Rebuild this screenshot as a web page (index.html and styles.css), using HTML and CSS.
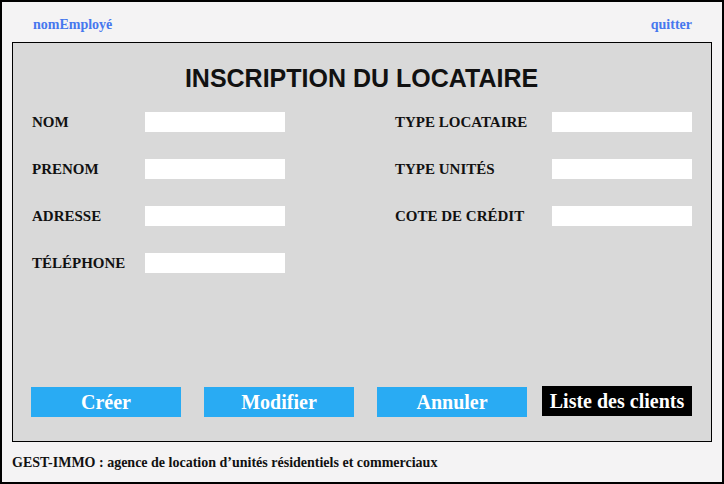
FILE: index.html
```html
<!DOCTYPE html>
<html lang="fr">
<head>
<meta charset="utf-8">
<title>Inscription du locataire</title>
<link rel="stylesheet" href="styles.css">
</head>
<body>
<div class="frame">
  <header class="topbar">
    <a class="toplink" href="#">nomEmployé</a>
    <a class="toplink" href="#">quitter</a>
  </header>
  <main class="panel">
    <h1 class="title">INSCRIPTION DU LOCATAIRE</h1>
    <div class="form">
      <div class="col col-left">
        <div class="row"><label class="label">NOM</label><input class="field" type="text"></div>
        <div class="row"><label class="label">PRENOM</label><input class="field" type="text"></div>
        <div class="row"><label class="label">ADRESSE</label><input class="field" type="text"></div>
        <div class="row"><label class="label">TÉLÉPHONE</label><input class="field" type="text"></div>
      </div>
      <div class="col col-right">
        <div class="row"><label class="label">TYPE LOCATAIRE</label><input class="field" type="text"></div>
        <div class="row"><label class="label">TYPE UNITÉS</label><input class="field" type="text"></div>
        <div class="row"><label class="label">COTE DE CRÉDIT</label><input class="field" type="text"></div>
      </div>
    </div>
    <div class="actions">
      <button class="btn btn-blue">Créer</button>
      <button class="btn btn-blue">Modifier</button>
      <button class="btn btn-blue">Annuler</button>
      <button class="btn btn-black">Liste des clients</button>
    </div>
  </main>
  <footer class="footer">GEST-IMMO : agence de location d’unités résidentiels et commerciaux</footer>
</div>
</body>
</html>
```
FILE: styles.css
```css
* { box-sizing: border-box; }
html, body { margin: 0; padding: 0; }
body {
  width: 724px;
  height: 484px;
  font-family: "Liberation Serif", "Times New Roman", serif;
  background: #f4f3f4;
}
.frame {
  width: 724px;
  height: 484px;
  border: 2px solid #000;
  background: #f4f3f4;
  display: flex;
  flex-direction: column;
  padding: 0 10px;
}
.topbar {
  height: 40px;
  display: flex;
  justify-content: space-between;
  align-items: flex-start;
  padding: 15px 20px 0 21px;
}
.toplink {
  color: #4677ee;
  font-weight: bold;
  font-size: 14px;
  text-decoration: none;
  line-height: 16px;
}
.panel {
  height: 400px;
  border: 1px solid #000;
  background: #d9d9d9;
  display: flex;
  flex-direction: column;
  padding: 0 19px 24px 18px;
}
.title {
  margin: 20px 0 0;
  text-align: center;
  font-family: "Liberation Sans", Arial, sans-serif;
  font-weight: bold;
  font-size: 25px;
  line-height: 30px;
  color: #111;
}
.form {
  display: flex;
  justify-content: space-between;
  margin-top: 19px;
}
.col {
  display: flex;
  flex-direction: column;
  gap: 27px;
}
.col-left { padding-left: 1px; }
.row {
  display: flex;
  align-items: center;
  height: 20px;
}
.label {
  font-weight: bold;
  font-size: 15px;
  color: #111;
}
.col-left .label { width: 113px; }
.col-right .label { width: 157px; }
.field {
  width: 140px;
  height: 20px;
  border: none;
  background: #fff;
  margin: 0;
  padding: 0;
  outline: none;
}
.actions {
  margin-top: auto;
  display: flex;
  align-items: flex-end;
  gap: 23px;
}
.btn {
  width: 150px;
  height: 30px;
  border: none;
  padding: 0;
  margin: 0;
  color: #fff;
  font-family: "Liberation Serif", "Times New Roman", serif;
  font-weight: bold;
  font-size: 20px;
  line-height: 30px;
}
.btn-blue { background: #29abf3; }
.btn-black {
  background: #000;
  margin-left: -8px;
  margin-bottom: 1px;
  line-height: 26px;
}
.footer {
  padding-top: 13px;
  margin-left: 0;
  font-weight: bold;
  font-size: 14px;
  color: #111;
}
```
